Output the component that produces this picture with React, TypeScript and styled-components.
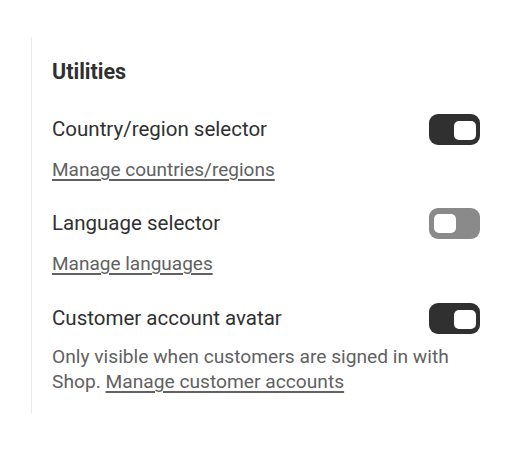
import React from "react";
import styled, { createGlobalStyle } from "styled-components";

const Global = createGlobalStyle`
    html, body {
        margin: 0;
        padding: 0;
        background: #ffffff;
    }
    body {
        font-family: Roboto, "Noto Sans", "Liberation Sans", sans-serif;
        color: #303030;
        -webkit-font-smoothing: antialiased;
    }
`;

const Page = styled.div`
    width: 512px;
    height: 452px;
    padding: 37px 0 0 31px;
    box-sizing: border-box;
`;

const Panel = styled.div`
    height: 377px;
    box-sizing: border-box;
    border-left: 1.5px solid #ebebeb;
    padding: 22px 32px 0 20px;
    display: flex;
    flex-direction: column;
`;

const Title = styled.h2`
    margin: 0 0 29px;
    font-size: 21.5px;
    line-height: 25px;
    font-weight: 700;
    color: #303030;
`;

const Setting = styled.div<{ $gap?: number }>`
    display: flex;
    flex-direction: column;
    flex-shrink: 0;
    margin-top: ${(props) => props.$gap ?? 0}px;
`;

const Row = styled.div`
    display: flex;
    align-items: center;
    justify-content: space-between;
    height: 32px;
`;

const Label = styled.span`
    font-size: 20.5px;
    line-height: 25px;
    color: #303030;
`;

const Link = styled.a`
    color: #616161;
    text-decoration: underline;
    text-underline-offset: 3px;
    text-decoration-thickness: 1.5px;
    cursor: pointer;
`;

const LinkLine = styled.div`
    margin-top: 12px;
    font-size: 19px;
    line-height: 25px;
`;

const Help = styled.p`
    margin: 10px 0 0;
    font-size: 19.2px;
    line-height: 25px;
    color: #616161;
`;

const Track = styled.button<{ $on: boolean }>`
    width: 51px;
    height: 31px;
    box-sizing: border-box;
    border: none;
    border-radius: 9px;
    padding: ${(props) => (props.$on ? "7px 4px 5px" : "6px 5px 5px")};
    display: flex;
    justify-content: ${(props) => (props.$on ? "flex-end" : "flex-start")};
    background: ${(props) => (props.$on ? "#303030" : "#8a8a8a")};
    cursor: pointer;
    flex-shrink: 0;
`;

const Knob = styled.span`
    width: 22px;
    height: 19px;
    border-radius: 5px;
    background: #ffffff;
`;

const Toggle = ({ on }: { on: boolean }) => (
    <Track $on={on} aria-pressed={on}>
        <Knob />
    </Track>
);

export default function App() {
    return (
        <Page>
            <Global />
            <Panel>
                <Title>Utilities</Title>
                <Setting>
                    <Row>
                        <Label>Country/region selector</Label>
                        <Toggle on={true} />
                    </Row>
                    <LinkLine>
                        <Link>Manage countries/regions</Link>
                    </LinkLine>
                </Setting>
                <Setting $gap={25}>
                    <Row>
                        <Label>Language selector</Label>
                        <Toggle on={false} />
                    </Row>
                    <LinkLine>
                        <Link>Manage languages</Link>
                    </LinkLine>
                </Setting>
                <Setting $gap={26}>
                    <Row>
                        <Label>Customer account avatar</Label>
                        <Toggle on={true} />
                    </Row>
                    <Help>
                        Only visible when customers are signed in with Shop.{" "}
                        <Link>Manage customer accounts</Link>
                    </Help>
                </Setting>
            </Panel>
        </Page>
    );
}
